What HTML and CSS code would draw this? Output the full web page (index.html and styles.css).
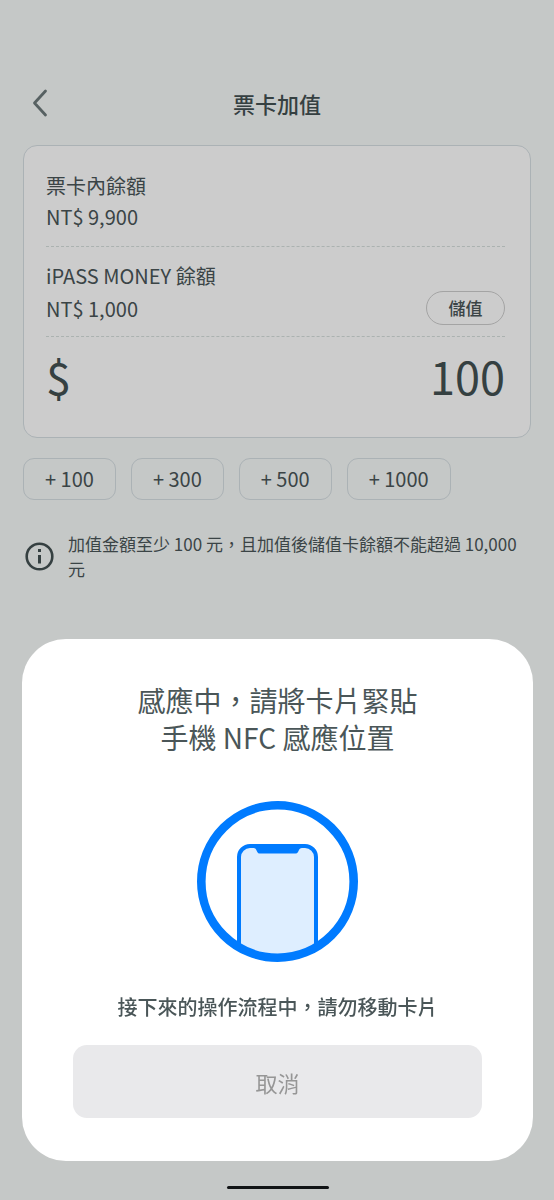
FILE: index.html
```html
<!DOCTYPE html>
<html lang="zh-Hant">
<head>
<meta charset="utf-8">
<meta name="viewport" content="width=device-width, initial-scale=1">
<title>票卡加值</title>
<link rel="stylesheet" href="styles.css">
</head>
<body>
<main class="page">
  <header class="header">
    <button class="back" type="button" aria-label="返回">
      <svg width="16" height="30" viewBox="0 0 16 30" fill="none" stroke="currentColor" stroke-width="2.800" stroke-linecap="round" stroke-linejoin="round"><path d="M13.5 3 2.500 15l11 12"/></svg>
    </button>
    <h1 class="header-title">票卡加值</h1>
  </header>

  <section class="card">
    <div class="balance">
      <p class="line">票卡內餘額</p>
      <p class="line">NT$ 9,900</p>
    </div>
    <div class="balance balance-wallet">
      <p class="line">iPASS MONEY 餘額</p>
      <div class="wallet-row">
        <p class="line">NT$ 1,000</p>
        <button class="pill" type="button">儲值</button>
      </div>
    </div>
    <label class="amount">
      <span>$</span>
      <input class="amount-input" type="text" inputmode="numeric" value="100" aria-label="加值金額">
    </label>
  </section>

  <div class="chips">
    <button class="chip" type="button">+ 100</button>
    <button class="chip" type="button">+ 300</button>
    <button class="chip" type="button">+ 500</button>
    <button class="chip" type="button">+ 1000</button>
  </div>

  <div class="note">
    <svg class="note-icon" width="29" height="29" viewBox="0 0 29 29" fill="none" aria-hidden="true">
      <circle cx="14.5" cy="14.5" r="12.8" stroke="currentColor" stroke-width="2.6"/>
      <path d="M13 7h3v3h-3zM13 13h3v8.500h-3z" fill="currentColor"/>
    </svg>
    <p class="note-text">加值金額至少 100 元，且加值後儲值卡餘額不能超過 10,000 元</p>
  </div>
</main>

<div class="overlay">
  <section class="sheet" role="dialog" aria-labelledby="sheet-title">
    <h2 class="sheet-title" id="sheet-title">感應中，請將卡片緊貼<br>手機 NFC 感應位置</h2>
    <svg class="sheet-art" width="161" height="161" viewBox="0 0 161 161" aria-hidden="true">
      <clipPath id="ring"><circle cx="80.500" cy="80.500" r="76"/></clipPath>
      <g clip-path="url(#ring)">
        <rect x="42" y="45" width="77" height="140" rx="11" fill="#deeeff" stroke="#007bff" stroke-width="4"/>
        <path d="M56 43h49v4c-2 0-2.500 1-3 2l-1 2q-.7 1.500-2.500 1.500H62.500Q61 52.500 60.300 51l-1-2c-.5-1-1.300-2-3.300-2z" fill="#007bff"/>
      </g>
      <circle cx="80.500" cy="80.500" r="76.200" fill="none" stroke="#007bff" stroke-width="8.600"/>
    </svg>
    <p class="sheet-text">接下來的操作流程中，請勿移動卡片</p>
    <button class="cancel" type="button">取消</button>
  </section>
  <div class="home-bar"></div>
</div>
</body>
</html>
```

FILE: styles.css
```css
* {
  box-sizing: border-box;
}

body {
  margin: 0;
  background: #f7faf9;
  color: #4a5658;
  font-family: "Noto Sans CJK TC", sans-serif;
  font-size: 20px;
}

h1, h2, p {
  margin: 0;
}

button, input {
  font: inherit;
  color: inherit;
  background: none;
  border: 0;
  padding: 0;
}

svg {
  display: block;
}

.page {
  min-height: 100vh;
  padding: 60px 23px 0;
}

.header {
  display: grid;
  grid-template-columns: 36px 1fr 36px;
  align-items: center;
  height: 85px;
}

.back {
  display: flex;
  padding-left: 9px;
  color: #6d7a7b;
}

.header-title {
  text-align: center;
  font-size: 22px;
  font-weight: 500;
  line-height: 32px;
  color: #435052;
}

.card {
  padding: 1px 25px 22px 22px;
  background: #fff;
  border: 1px solid #d6dfe3;
  border-radius: 14px;
}

.balance {
  padding: 23px 0 14px;
  border-bottom: 1px dashed #d6dfdd;
}

.balance-wallet {
  padding: 13px 0 11px;
}

.line {
  line-height: 31px;
}

.wallet-row {
  display: flex;
  justify-content: space-between;
  align-items: center;
}

.pill {
  width: 79px;
  height: 34px;
  border: 1px solid #cdcdcd;
  border-radius: 17px;
  font-size: 17px;
  font-weight: 500;
  line-height: 32px;
}

.amount {
  display: flex;
  justify-content: space-between;
  font-size: 45px;
  line-height: 78px;
  color: #435052;
}

.amount-input {
  min-width: 0;
  width: 200px;
  height: 78px;
  text-align: right;
}

.chips {
  display: flex;
  gap: 15px;
  margin-top: 20px;
}

.chip {
  height: 42px;
  padding: 0 21px;
  border: 1px solid #d6dfe3;
  border-radius: 11px;
  line-height: 40px;
}

.note {
  display: flex;
  align-items: center;
  gap: 14px;
  margin-top: 31px;
  padding-left: 2px;
}

.note-icon {
  flex: none;
  color: #435052;
}

.note-text {
  font-size: 17px;
  line-height: 25px;
}

.overlay {
  position: fixed;
  inset: 0;
  display: flex;
  flex-direction: column;
  justify-content: flex-end;
  padding: 0 21px 11px 22px;
  background: rgba(0, 0, 0, 0.2);
}

.sheet {
  display: flex;
  flex-direction: column;
  align-items: center;
  padding: 43px 51px;
  background: #fff;
  border-radius: 44px;
}

.sheet-title {
  text-align: center;
  font-size: 28px;
  font-weight: 400;
  line-height: 37px;
}

.sheet-art {
  margin: 45px 0 30px;
}

.sheet-text {
  font-weight: 500;
  line-height: 30px;
}

.cancel {
  width: 100%;
  height: 73px;
  margin-top: 23px;
  border-radius: 14px;
  background: #e9e9eb;
  color: #969696;
  font-size: 22px;
}

.home-bar {
  align-self: center;
  width: 102px;
  height: 3px;
  margin-top: 25px;
  border-radius: 2px;
  background: #111416;
}
```
